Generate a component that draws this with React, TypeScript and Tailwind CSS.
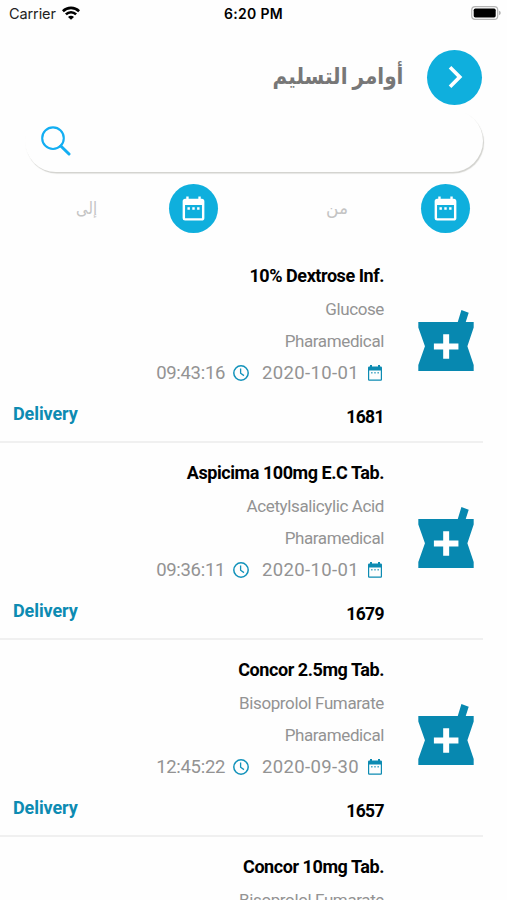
import { MdChevronRight, MdDateRange } from 'react-icons/md';

interface Order {
  id: string;
  name: string;
  generic: string;
  supplier: string;
  date: string;
  time: string;
  status: string;
}

const ORDERS: Order[] = [
  {
    id: '1681',
    name: '10% Dextrose Inf.',
    generic: 'Glucose',
    supplier: 'Pharamedical',
    date: '2020-10-01',
    time: '09:43:16',
    status: 'Delivery',
  },
  {
    id: '1679',
    name: 'Aspicima 100mg E.C Tab.',
    generic: 'Acetylsalicylic Acid',
    supplier: 'Pharamedical',
    date: '2020-10-01',
    time: '09:36:11',
    status: 'Delivery',
  },
  {
    id: '1657',
    name: 'Concor 2.5mg Tab.',
    generic: 'Bisoprolol Fumarate',
    supplier: 'Pharamedical',
    date: '2020-09-30',
    time: '12:45:22',
    status: 'Delivery',
  },
];

// Only the top of this one fits on the screen.
const NEXT_ORDER = { name: 'Concor 10mg Tab.', generic: 'Bisoprolol Fumarate' };

function MortarIcon() {
  return (
    <svg viewBox="54 59 167 184" className="h-[61px] w-14 shrink-0" aria-hidden="true">
      <path
        fill="#0788b0"
        d="M54 95H173L184 59L206 67L197 95H221V112L202 168L221 225V243H54V225L74 168L54 112Z"
      />
      <path fill="#fff" d="M129 132h18v28h28v18h-28v28h-18v-28h-28v-18h28z" />
    </svg>
  );
}

function SearchIcon() {
  return (
    <svg viewBox="0 0 30 30" className="h-[30px] w-[30px]" fill="none" stroke="#13aef2" aria-hidden="true">
      <circle cx="12" cy="12.2" r="10.8" strokeWidth="2.1" />
      <path d="M19.8 20L28 28" strokeWidth="3" strokeLinecap="round" />
    </svg>
  );
}

function SmallCalendarIcon() {
  return (
    <svg viewBox="0 0 14 16" className="ml-[9px] h-4 w-3.5 text-[#0d8bb2]" aria-hidden="true">
      <path
        fill="currentColor"
        fillRule="evenodd"
        d="M2 0h2v1.6h6V0h2v1.6h.8q1.2 0 1.2 1.2v11.8q0 1.2-1.2 1.2H1.2Q0 15.8 0 14.6V2.8Q0 1.6 1.2 1.6H2zM1.2 5.4v9.2h11.6V5.4z"
      />
      <path fill="currentColor" opacity=".7" d="M3 7h1.6v1.4H3zM6.2 7h1.6v1.4H6.2zM9.4 7H11v1.4H9.4z" />
    </svg>
  );
}

function ClockIcon() {
  return (
    <svg viewBox="0 0 16 16" className="ml-2 h-4 w-4" fill="none" stroke="#1292ba" aria-hidden="true">
      <circle cx="8" cy="8" r="7.2" strokeWidth="1.5" />
      <path d="M7.6 3.6V8.2L11 10.6" strokeWidth="1.3" />
    </svg>
  );
}

function StatusBar() {
  return (
    <div className="flex h-7 items-center font-['Inter',sans-serif] text-black">
      <div className="flex flex-1 items-center gap-1.5 pl-[9px]">
        <span className="text-[14.5px] tracking-[-0.1px] text-[#222]">Carrier</span>
        <svg viewBox="0 0 18 14" className="mb-0.5 h-3.5 w-[18px]" fill="none" stroke="#000" strokeWidth="2.6" aria-hidden="true">
          <path d="M.9 5.2A11.6 11.6 0 0 1 17.1 5.2" />
          <path d="M3.9 8.4A7.2 7.2 0 0 1 14.1 8.4" />
          <path d="M9 13.8L6 10.9A4.2 4.2 0 0 1 12 10.9Z" fill="#000" stroke="none" />
        </svg>
      </div>
      <span className="-mt-0.5 mr-[3px] text-[14px] font-semibold tracking-[0.3px]">6:20 PM</span>
      <div className="flex flex-1 items-center justify-end pr-1.5">
        <svg viewBox="0 0 30 14" className="mb-0.5 h-3.5 w-[30px]" aria-hidden="true">
          <rect x=".7" y=".7" width="26" height="12.6" rx="3.4" fill="#fff" stroke="#b5b5b5" strokeWidth="1.2" />
          <rect x="2.7" y="2.6" width="22" height="8.8" rx="1.6" fill="#000" />
          <path d="M28 4.8q1.8 .6 1.8 2.2t-1.8 2.2z" fill="#b5b5b5" />
        </svg>
      </div>
    </div>
  );
}

function DateButton({ label }: { label: string }) {
  return (
    <button
      aria-label={label}
      className="grid h-[49px] w-[49px] shrink-0 place-items-center rounded-full bg-[#0fafdd] text-white"
    >
      <MdDateRange size={29} />
    </button>
  );
}

function OrderName({ children }: { children: string }) {
  return (
    <h2 className="h-7 text-[18px] leading-7 font-bold tracking-[-0.44px] text-black">{children}</h2>
  );
}

function GenericName({ children }: { children: string }) {
  return <p className="h-8 text-[17px] leading-8 tracking-[-0.38px]">{children}</p>;
}

function OrderRow({ order }: { order: Order }) {
  return (
    <li className="flex h-[197px] w-[483px] border-b-2 border-[#f0f0f0] pr-[9px] pl-[13px]">
      <span className="mt-[154px] h-7 text-[18px] leading-7 font-bold tracking-[-0.1px] text-[#0d8bb2]">
        {order.status}
      </span>
      <div className="flex flex-1 flex-col items-end pt-4 text-[#939393]">
        <OrderName>{order.name}</OrderName>
        <div className="mt-[3px] text-right">
          <GenericName>{order.generic}</GenericName>
          <GenericName>{order.supplier}</GenericName>
        </div>
        <div className="mt-0.5 mr-[2px] flex h-7 items-center text-[18.5px] leading-7">
          <span className="tracking-[-0.3px]">{order.time}</span>
          <ClockIcon />
          <span className="ml-[13px] tracking-[0.35px]">{order.date}</span>
          <SmallCalendarIcon />
        </div>
        <span className="mt-4 h-7 text-[17.5px] leading-7 font-bold tracking-[-0.6px] text-black">{order.id}</span>
      </div>
      <div className="mt-16 ml-[34px]">
        <MortarIcon />
      </div>
    </li>
  );
}

export default function App() {
  return (
    <div className="h-[900px] w-[507px] overflow-hidden bg-[#fefefe] font-['Roboto','DejaVu_Sans',sans-serif]">
      <StatusBar />
      <header className="flex h-[82px] items-center justify-end gap-6 pt-4 pr-[25px]">
        <h1 dir="rtl" className="origin-right scale-x-[0.87] text-[23px] font-bold text-[#777]">
          أوامر التسليم
        </h1>
        <button
          aria-label="رجوع"
          className="grid h-[55px] w-[55px] place-items-center rounded-full bg-[#0fafdd] text-white"
        >
          <MdChevronRight size={44} />
        </button>
      </header>
      <div className="mr-6 ml-[25px] flex h-[62px] items-center rounded-full bg-[#fefefe] pl-4 shadow-[1px_1.5px_1px_#d2d2ce]">
        <SearchIcon />
      </div>
      <div className="flex h-[74px] items-start pt-3 text-[17px] leading-[49px] text-[#c4c4c4]">
        <span dir="rtl" className="w-[97px] origin-right scale-x-[0.87]">
          إلى
        </span>
        <div className="ml-[72px]">
          <DateButton label="إلى" />
        </div>
        <span dir="rtl" className="flex-1 pr-[73px] tracking-[-0.3px]">
          من
        </span>
        <div className="mr-[37px]">
          <DateButton label="من" />
        </div>
      </div>
      <ul>
        {ORDERS.map((order) => (
          <OrderRow key={order.id} order={order} />
        ))}
        <li className="flex w-[384px] flex-col items-end pt-4 text-[#939393]">
          <OrderName>{NEXT_ORDER.name}</OrderName>
          <div className="mt-[3px]">
            <GenericName>{NEXT_ORDER.generic}</GenericName>
          </div>
        </li>
      </ul>
    </div>
  );
}
